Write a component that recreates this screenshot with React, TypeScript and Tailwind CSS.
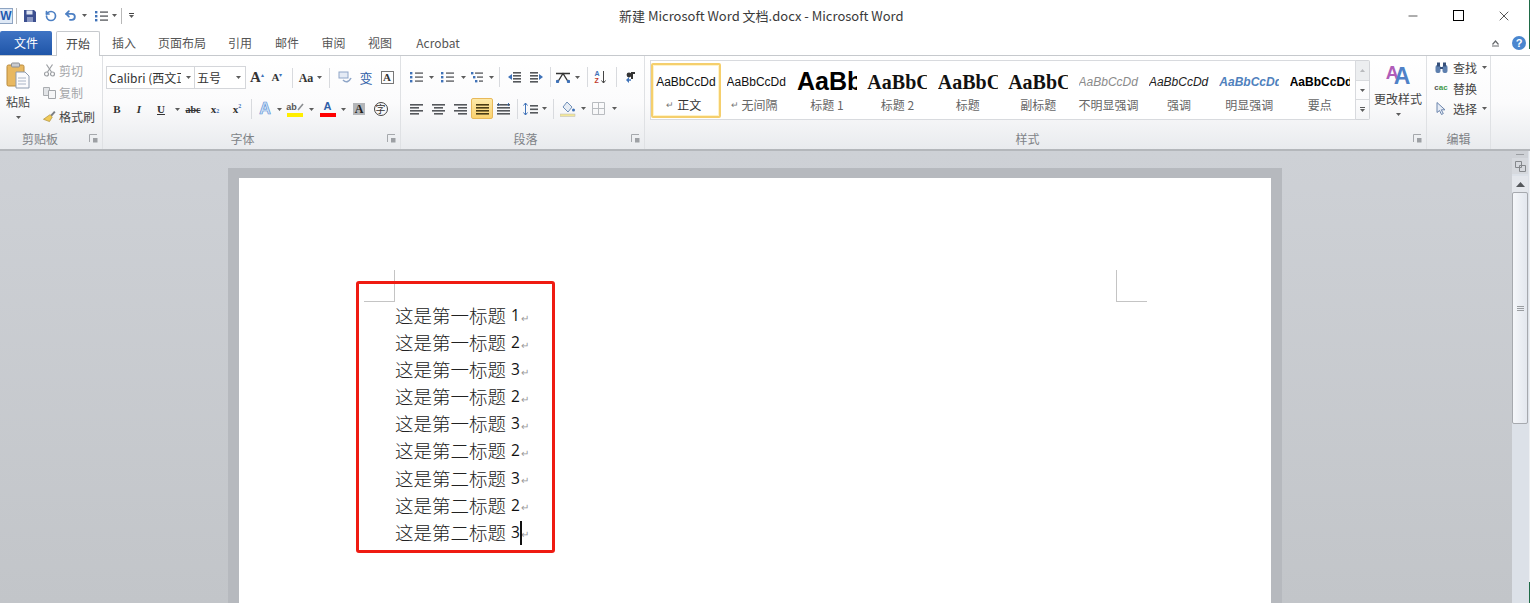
import React from "react";
import { Minus, X, Undo2, RotateCcw } from "lucide-react";

const UI = "font-['Noto_Sans_CJK_SC','Liberation_Sans',sans-serif]";

type CellProps = { className: string; children?: React.ReactNode };

const Cell = ({ className, children }: CellProps) => (
  <span className={`flex shrink-0 items-center justify-center ${className}`}>{children}</span>
);

const Caret = ({ className = "" }: { className?: string }) => (
  <svg width="5" height="3" viewBox="0 0 5 3" className={`shrink-0 ${className}`}>
    <path d="M0 0h5L2.5 3z" fill="#5c5c5c" />
  </svg>
);

const Sep = ({ className }: { className: string }) => (
  <Cell className={className}>
    <span className="h-[20px] w-px bg-[#d8dade]" />
  </Cell>
);

const Launcher = () => (
  <svg width="9" height="9" viewBox="0 0 9 9">
    <path d="M0.5 8V0.5H8" fill="none" stroke="#a5a8ac" />
    <path d="M4 4h4.5v4.5H4z" fill="#9da0a4" />
  </svg>
);

// paragraph icons
const Lines = ({ kind }: { kind: "left" | "center" | "right" | "justify" | "dist" }) => {
  const rows = [
    { y: 1, l: 0, w: 13 },
    { y: 4, l: 0, w: 13 },
    { y: 7, l: 0, w: 13 },
    { y: 10, l: 0, w: 13 },
  ].map((r, i) => {
    const short = i % 2 === 1 ? 4 : 0;
    if (kind === "left") return { ...r, w: 13 - short };
    if (kind === "center") return { ...r, l: short / 2, w: 13 - short };
    if (kind === "right") return { ...r, l: short, w: 13 - short };
    return r;
  });
  return (
    <svg width="13" height="12" viewBox="0 0 13 12">
      {rows.map((r) => (
        <rect key={r.y} x={r.l} y={r.y} width={r.w} height="1.6" fill={kind === "justify" ? "#4a3c14" : "#55585c"} />
      ))}
      {kind === "dist" && <path d="M1 0l1.5 1.5L1 3M12 0l-1.5 1.5L12 3" stroke="#3b6fb5" fill="none" />}
    </svg>
  );
};

const ListIcon = ({ kind }: { kind: "bullet" | "number" | "multi" }) => (
  <svg width="13" height="12" viewBox="0 0 13 12">
    {[1, 5, 9].map((y, i) => (
      <g key={y}>
        <rect x={kind === "multi" ? i * 2 : 0} y={y} width="2.4" height="2.4" fill="#3f72b8" />
        <rect x={kind === "multi" ? 4 + i * 2 : 5} y={y + 0.4} width={kind === "multi" ? 8 - i * 2 : 8} height="1.4" fill="#606367" />
      </g>
    ))}
  </svg>
);

const Indent = ({ flip }: { flip?: boolean }) => (
  <svg width="13" height="12" viewBox="0 0 13 12" className={flip ? "-scale-x-100" : ""}>
    {[1, 4, 7, 10].map((y) => (
      <rect key={y} x="5" y={y} width="8" height="1.6" fill="#55585c" />
    ))}
    <path d="M4 3L0 6l4 3z" fill="#3f72b8" />
  </svg>
);

const PasteIcon = () => (
  <svg width="24" height="27" viewBox="0 0 24 27">
    <rect x="1" y="3" width="17" height="21" rx="1.5" fill="#e8b861" stroke="#b98a3c" />
    <rect x="5.5" y="1" width="8" height="4" rx="1" fill="#c9cbd0" stroke="#8c8f94" />
    <path d="M10 10h9l4 4v12H10z" fill="#fbfbfd" stroke="#8d9bb0" />
    <path d="M12 16h8M12 19h8M12 22h8" stroke="#a9b4c6" />
  </svg>
);

const ScissorsIcon = () => (
  <svg width="11" height="13" viewBox="0 0 11 13" fill="none" stroke="#9c9fa3" strokeWidth="1.2">
    <path d="M2.5 0.5l5 7.5M8.5 0.5l-5 7.5" />
    <circle cx="2.5" cy="10" r="2" />
    <circle cx="8.5" cy="10" r="2" />
  </svg>
);

const CopyIcon = () => (
  <svg width="13" height="12" viewBox="0 0 13 12">
    <path d="M0.5 0.5h6v8h-6z" fill="#e2e4e7" stroke="#aaadb1" />
    <path d="M5.5 3.5h7v8h-7z" fill="#f6f6f7" stroke="#a3a6aa" />
  </svg>
);

const BrushIcon = () => (
  <svg width="14" height="13" viewBox="0 0 14 13">
    <path d="M8 5l4-4.5 1.5 1.5L9.5 6.5z" fill="#7a7d82" />
    <path d="M7.5 4.5l2.5 2.5-3 5L0.5 9.5z" fill="#f0c957" stroke="#a88a30" strokeWidth="0.7" />
  </svg>
);

const StyleItem = ({
  preview,
  previewClass,
  label,
  mark,
  selected,
}: {
  preview: string;
  previewClass: string;
  label: string;
  mark?: boolean;
  selected?: boolean;
}) => (
  <div
    className={`flex h-[55px] w-[70.4px] shrink-0 flex-col items-center ${
      selected ? "rounded-[2px] border-2 border-[#f5cf6d] shadow-[inset_0_0_0_1px_#fff3c9]" : "border-2 border-transparent"
    }`}
  >
    <div className="mt-[3px] flex h-[29px] w-[60px] items-center overflow-hidden">
      <span className={`whitespace-nowrap ${previewClass}`}>{preview}</span>
    </div>
    <div className={`flex items-center gap-[3px] text-[12px] leading-[16px] ${mark ? "pr-[5px]" : ""} ${selected ? "text-[#333]" : "text-[#666]"}`}>
      {mark && <span className="text-[9px] text-[#777]">↵</span>}
      {label}
    </div>
  </div>
);

const STYLES = [
  { preview: "AaBbCcDd", previewClass: "font-['Liberation_Sans'] text-[12px] text-[#111]", label: "正文", mark: true, selected: true },
  { preview: "AaBbCcDd", previewClass: "font-['Liberation_Sans'] text-[12px] text-[#111]", label: "无间隔", mark: true },
  { preview: "AaBbCcDd", previewClass: "font-['Liberation_Sans'] text-[25px] font-bold text-black", label: "标题 1" },
  { preview: "AaBbCcDd", previewClass: "font-['Liberation_Serif'] text-[20px] font-bold text-[#111]", label: "标题 2" },
  { preview: "AaBbCcDd", previewClass: "font-['Liberation_Serif'] text-[20px] font-bold text-[#111]", label: "标题" },
  { preview: "AaBbCcDd", previewClass: "font-['Liberation_Serif'] text-[20px] font-bold text-[#111]", label: "副标题" },
  { preview: "AaBbCcDd", previewClass: "font-['Liberation_Sans'] text-[12px] italic text-[#8b8b8b]", label: "不明显强调" },
  { preview: "AaBbCcDd", previewClass: "font-['Liberation_Sans'] text-[12px] italic text-[#222]", label: "强调" },
  { preview: "AaBbCcDd", previewClass: "font-['Liberation_Sans'] text-[12px] font-bold italic text-[#4f81bd]", label: "明显强调" },
  { preview: "AaBbCcDd", previewClass: "font-['Liberation_Sans'] text-[12px] font-bold text-black", label: "要点" },
];

const LINES = [
  "这是第一标题 1",
  "这是第一标题 2",
  "这是第一标题 3",
  "这是第一标题 2",
  "这是第一标题 3",
  "这是第二标题 2",
  "这是第二标题 3",
  "这是第二标题 2",
  "这是第二标题 3",
];

const GroupLabel = ({ text, launcher, className = "" }: { text: string; launcher?: boolean; className?: string }) => (
  <div className={`relative flex h-[19px] items-center justify-center pb-[2px] text-[12px] text-[#808387] ${className}`}>
    {text}
    {launcher && (
      <span className="absolute right-[4px] top-[4px] flex">
        <Launcher />
      </span>
    )}
  </div>
);

export default function App() {
  return (
    <div className={`relative flex h-[603px] w-[1530px] flex-col overflow-hidden bg-white ${UI}`}>
      {/* title bar */}
      <div className="flex h-[31px] shrink-0 items-center pr-[18px]">
        <div className="flex w-[619px] shrink-0 items-center">
          <span className="ml-[-1px] flex h-[16px] w-[14px] shrink-0 items-center justify-center border border-[#8ea4c2] bg-[#dfe9f6] font-['Liberation_Sans'] text-[12px] font-bold text-[#1f5cb0]">
            W
          </span>
          <span className="ml-[3px] h-[16px] w-px shrink-0 bg-[#b8b8b8]" />
          <svg width="12" height="12" viewBox="0 0 12 12" className="ml-[7px] shrink-0">
            <path d="M0 0h10l2 2v10H0z" fill="#3c4f8f" />
            <rect x="2.5" y="0.5" width="6" height="4" fill="#dfe5f2" />
            <rect x="3" y="7" width="6" height="5" fill="#8a97c2" />
          </svg>
          <Cell className="ml-[8px] w-[14px]">
            <RotateCcw size={12} strokeWidth={3.4} color="#4d80c4" />
          </Cell>
          <Cell className="ml-[5px] w-[14px]">
            <Undo2 size={13} strokeWidth={3.4} color="#4d80c4" />
          </Cell>
          <Caret className="ml-[5px]" />
          <Cell className="ml-[7px] w-[14px]">
            <ListIcon kind="number" />
          </Cell>
          <Caret className="ml-[4px]" />
          <span className="ml-[4px] h-[16px] w-px shrink-0 bg-[#b8b8b8]" />
          <span className="ml-[7px] flex shrink-0 flex-col items-center gap-[1px]">
            <span className="h-px w-[5px] bg-[#444]" />
            <Caret />
          </span>
        </div>
        <div className="whitespace-nowrap text-[13px] text-[#3a3a3a]">新建 Microsoft Word 文档.docx - Microsoft Word</div>
        <div className="ml-auto flex items-center">
          <Cell className="w-[14px]">
            <Minus size={14} strokeWidth={1.1} color="#000" />
          </Cell>
          <span className="ml-[33px] h-[11px] w-[11px] shrink-0 border border-black" />
          <Cell className="ml-[32px] w-[16px]">
            <X size={16} strokeWidth={1} color="#000" />
          </Cell>
        </div>
      </div>

      {/* tabs */}
      <div className="flex h-[25px] shrink-0 items-end border-b border-[#c6c9cd] text-[12px] text-[#555]">
        <div className="flex h-[24px] w-[52px] items-center justify-center rounded-t-[2px] bg-gradient-to-b from-[#3f74c4] to-[#1f55a8] text-white">文件</div>
        <div className="relative top-px ml-[4px] flex h-[25px] w-[44px] items-center justify-center rounded-t-[2px] border border-b-0 border-[#c6c9cd] bg-white text-[#444]">开始</div>
        <div className="flex h-[24px] w-[48px] items-center justify-center">插入</div>
        <div className="flex h-[24px] w-[68px] items-center justify-center">页面布局</div>
        <div className="flex h-[24px] w-[48px] items-center justify-center">引用</div>
        <div className="flex h-[24px] w-[46px] items-center justify-center">邮件</div>
        <div className="flex h-[24px] w-[47px] items-center justify-center">审阅</div>
        <div className="flex h-[24px] w-[46px] items-center justify-center">视图</div>
        <div className="flex h-[24px] w-[70px] items-center justify-center">Acrobat</div>
        <div className="ml-auto flex h-[24px] items-center pr-[4px]">
          <svg width="9" height="7" viewBox="0 0 9 7" className="mr-[12px]" fill="none" stroke="#66696d" strokeWidth="1.2">
            <path d="M1 6h7M1.5 4.5L4.5 1l3 3.5" />
          </svg>
          <span className="flex h-[14px] w-[14px] items-center justify-center rounded-full bg-[#4a86cf] font-['Liberation_Sans'] text-[11px] font-bold text-white">?</span>
        </div>
      </div>

      {/* ribbon */}
      <div className="flex h-[95px] shrink-0 border-b-2 border-[#b4b7bb] bg-gradient-to-b from-white via-[#fbfbfc] to-[#e9ebee]">
        {/* clipboard */}
        <div className="flex w-[103px] shrink-0 flex-col border-r border-[#dfe1e4]">
          <div className="flex h-[74px]">
            <div className="flex w-[36px] flex-col items-center pt-[6px]">
              <PasteIcon />
              <span className="mt-[5px] text-[12px] leading-[16px] text-[#444]">粘贴</span>
              <Caret className="mt-[6px]" />
            </div>
            <div className="ml-[7px] flex flex-col gap-[5px] pt-[6px] text-[12px] leading-[17px] text-[#a5a7aa]">
              <div className="flex items-center gap-[3px]">
                <Cell className="w-[13px]"><ScissorsIcon /></Cell>
                剪切
              </div>
              <div className="flex items-center gap-[3px]">
                <Cell className="w-[13px]"><CopyIcon /></Cell>
                复制
              </div>
              <div className="mt-[2px] flex items-center gap-[3px] text-[#444]">
                <Cell className="w-[13px]"><BrushIcon /></Cell>
                格式刷
              </div>
            </div>
          </div>
          <GroupLabel text="剪贴板" launcher className="pr-[22px]" />
        </div>

        {/* font */}
        <div className="flex w-[298px] shrink-0 flex-col border-r border-[#dfe1e4]">
          <div className="h-[74px]">
            <div className="flex h-[33px] items-end pl-[3px]">
              <div className="flex h-[23px] w-[140px] shrink-0 items-center border border-[#d4d6da] bg-white text-[12px] text-[#333]">
                <span className="w-[74px] overflow-hidden whitespace-nowrap pl-[2px]">Calibri (西文正文)</span>
                <Caret className="ml-[5px]" />
                <span className="ml-[3px] h-full w-px bg-[#d4d6da]" />
                <span className="pl-[2px]">五号</span>
                <Caret className="ml-auto mr-[4px]" />
              </div>
              <div className="flex h-[23px] items-center font-['Liberation_Serif'] text-[#333]">
                <Cell className="w-[22px]">
                  <span className="text-[15px] font-bold leading-none">A</span>
                  <span className="mb-[6px] text-[6px] leading-none text-[#3f72b8]">▴</span>
                </Cell>
                <Cell className="w-[18px]">
                  <span className="text-[11px] font-bold leading-none">A</span>
                  <span className="mb-[6px] text-[6px] leading-none text-[#3f72b8]">▾</span>
                </Cell>
                <Sep className="w-[12px]" />
                <Cell className="w-[16px] text-[12px] font-bold">Aa</Cell>
                <Cell className="w-[10px]"><Caret /></Cell>
                <Sep className="w-[10px]" />
                <Cell className="w-[21px]">
                  <svg width="14" height="13" viewBox="0 0 14 13" fill="none">
                    <rect x="1" y="1" width="9" height="6" fill="#e5ebf5" stroke="#8fa6c8" />
                    <path d="M5 9c3 3 6 2 8-2" stroke="#8fa6c8" strokeWidth="1.6" />
                  </svg>
                </Cell>
                <Cell className={`w-[22px] text-[13px] text-[#2f5fa8] ${UI}`}>变</Cell>
                <Cell className="w-[20px]">
                  <span className="flex h-[13px] w-[13px] items-center justify-center border border-[#777] text-[11px] font-bold leading-none">A</span>
                </Cell>
              </div>
            </div>
            <div className="mt-[9px] flex h-[22px] items-center pl-[3px] font-['Liberation_Serif'] text-[#333]">
              <Cell className="w-[22px] text-[11px] font-bold">B</Cell>
              <Cell className="w-[22px] text-[11px] font-bold italic">I</Cell>
              <Cell className="w-[22px] text-[11px] font-bold underline">U</Cell>
              <Cell className="w-[10px]"><Caret /></Cell>
              <Cell className="w-[22px] text-[10px] font-bold line-through">abc</Cell>
              <Cell className="w-[22px] text-[11px] font-bold">
                x<span className="mt-[5px] text-[6px] text-[#3f72b8]">2</span>
              </Cell>
              <Cell className="w-[22px] text-[11px] font-bold">
                x<span className="mb-[5px] text-[6px] text-[#3f72b8]">2</span>
              </Cell>
              <Sep className="w-[6px]" />
              <Cell className="w-[22px] font-['Liberation_Sans'] text-[16px] font-bold text-[#cfe2f7] [-webkit-text-stroke:0.7px_#5f93d6]">A</Cell>
              <Cell className="w-[7px]"><Caret /></Cell>
              <Cell className="w-[24px]">
                <span className="flex flex-col items-center">
                  <span className="flex items-center">
                    <span className="font-['Liberation_Sans'] text-[9px] font-bold leading-[10px] text-[#555]">ab</span>
                    <svg width="7" height="8" viewBox="0 0 7 8">
                      <path d="M1 7l5-6" stroke="#8a8d91" strokeWidth="1.6" />
                    </svg>
                  </span>
                  <span className="mt-[1px] h-[4px] w-[16px] bg-[#ffee00]" />
                </span>
              </Cell>
              <Cell className="w-[8px]"><Caret /></Cell>
              <Cell className="w-[25px]">
                <span className="flex flex-col items-center">
                  <span className="font-['Liberation_Sans'] text-[11px] font-bold leading-[11px] text-[#2f5fa8]">A</span>
                  <span className="mt-[1px] h-[4px] w-[16px] bg-[#f00]" />
                </span>
              </Cell>
              <Cell className="w-[7px]"><Caret /></Cell>
              <Cell className="w-[24px]">
                <span className="flex h-[12px] w-[12px] items-center justify-center bg-[#b4b6b9] font-['Liberation_Serif'] text-[12px] font-bold leading-none text-[#222]">A</span>
              </Cell>
              <Cell className="w-[19px]">
                <span className={`flex h-[14px] w-[14px] items-center justify-center rounded-full border border-[#444] text-[10px] leading-none text-[#333] ${UI}`}>字</span>
              </Cell>
            </div>
          </div>
          <GroupLabel text="字体" launcher className="pr-[18px]" />
        </div>

        {/* paragraph */}
        <div className="flex w-[244px] shrink-0 flex-col border-r border-[#dfe1e4]">
          <div className="h-[74px] pl-[5px]">
            <div className="mt-[10px] flex h-[22px] items-center">
              <Cell className="w-[20px]"><ListIcon kind="bullet" /></Cell>
              <Cell className="w-[10px]"><Caret /></Cell>
              <Cell className="w-[22px]"><ListIcon kind="number" /></Cell>
              <Cell className="w-[10px]"><Caret /></Cell>
              <Cell className="w-[19px]"><ListIcon kind="multi" /></Cell>
              <Cell className="w-[8px]"><Caret /></Cell>
              <Sep className="w-[8px]" />
              <Cell className="w-[22px]"><Indent /></Cell>
              <Cell className="w-[22px]"><Indent flip /></Cell>
              <Sep className="w-[6px]" />
              <Cell className="w-[20px]">
                <svg width="14" height="11" viewBox="0 0 14 11" fill="none" stroke="#333" strokeWidth="1.4">
                  <path d="M0 1.5h14M2 9.5l5-8 5 8" />
                  <circle cx="1.5" cy="9.5" r="1" fill="#3f72b8" stroke="#3f72b8" />
                  <circle cx="12.5" cy="9.5" r="1" fill="#3f72b8" stroke="#3f72b8" />
                </svg>
              </Cell>
              <Cell className="w-[8px]"><Caret /></Cell>
              <Sep className="w-[12px]" />
              <Cell className="w-[14px] gap-[1px]">
                <span className="flex flex-col font-['Liberation_Sans'] text-[7px] font-bold leading-[7px]">
                  <span className="text-[#3f72b8]">A</span>
                  <span className="text-[#c0392b]">Z</span>
                </span>
                <svg width="5" height="13" viewBox="0 0 5 13" fill="none" stroke="#444">
                  <path d="M2.5 0v12M0.5 9.5l2 2.5 2-2.5" />
                </svg>
              </Cell>
              <Sep className="w-[18px]" />
              <Cell className="w-[10px]">
                <svg width="9" height="12" viewBox="0 0 9 12">
                  <path d="M5 1h4v2H7v5H5z" fill="#333" />
                  <circle cx="3" cy="4" r="2.4" fill="#333" />
                  <path d="M0 9l3 3V9.8h2V8.2H3V6z" fill="#3f72b8" />
                </svg>
              </Cell>
            </div>
            <div className="mt-[10px] flex h-[21px] items-center">
              <Cell className="w-[21px]"><Lines kind="left" /></Cell>
              <Cell className="w-[22px]"><Lines kind="center" /></Cell>
              <Cell className="w-[22px]"><Lines kind="right" /></Cell>
              <Cell className="h-[21px] w-[22px] rounded-[2px] border border-[#e8b95a] bg-gradient-to-b from-[#fde9a8] to-[#fbd26e]"><Lines kind="justify" /></Cell>
              <Cell className="w-[21px]"><Lines kind="dist" /></Cell>
              <Sep className="w-[7px]" />
              <Cell className="w-[18px]">
                <svg width="15" height="14" viewBox="0 0 15 14">
                  <path d="M2.5 1v12M0.5 3.5l2-2.5 2 2.5M0.5 10.5l2 2.5 2-2.5" fill="none" stroke="#3f72b8" />
                  <rect x="7" y="3" width="8" height="1.6" fill="#55585c" />
                  <rect x="7" y="6.5" width="8" height="1.6" fill="#55585c" />
                  <rect x="7" y="10" width="8" height="1.6" fill="#55585c" />
                </svg>
              </Cell>
              <Cell className="w-[10px]"><Caret /></Cell>
              <Sep className="w-[8px]" />
              <Cell className="w-[22px]">
                <svg width="16" height="16" viewBox="0 0 16 16">
                  <path d="M7 1l5 5-4 5-5-5z" fill="#e6ecf4" stroke="#6f8fb8" />
                  <circle cx="13.5" cy="9" r="1.5" fill="#3f72b8" />
                  <rect x="0" y="13" width="15" height="2.4" fill="#f2e79a" stroke="#b8b8b8" strokeWidth="0.5" />
                </svg>
              </Cell>
              <Cell className="w-[8px]"><Caret /></Cell>
              <Cell className="w-[22px]">
                <svg width="13" height="13" viewBox="0 0 13 13" fill="none" stroke="#b9bcc0">
                  <path d="M0.5 0.5h12v12h-12zM6.5 0.5v12M0.5 6.5h12" />
                </svg>
              </Cell>
              <Cell className="w-[10px]"><Caret /></Cell>
            </div>
          </div>
          <GroupLabel text="段落" launcher className="pl-[6px]" />
        </div>

        {/* styles */}
        <div className="flex w-[782px] shrink-0 flex-col border-r border-[#dfe1e4]">
          <div className="flex h-[74px] pl-[5px] pt-[4px]">
            <div className="flex h-[60px] w-[706px] shrink-0 items-center border border-[#d8dade] bg-white">
              {STYLES.map((s) => (
                <StyleItem key={s.label} {...s} />
              ))}
            </div>
            <div className="flex h-[60px] w-[14px] shrink-0 flex-col rounded-r-[2px] border border-l-0 border-[#d3d5d9]">
              <Cell className="h-[20px] border-b border-[#d9dbde] bg-[#eceef0]">
                <svg width="5" height="3" viewBox="0 0 5 3"><path d="M0 3h5L2.5 0z" fill="#b8babd" /></svg>
              </Cell>
              <Cell className="h-[19px] border-b border-[#d9dbde]"><Caret /></Cell>
              <Cell className="h-[19px] flex-col gap-[1px]">
                <span className="h-px w-[5px] bg-[#5c5c5c]" />
                <Caret />
              </Cell>
            </div>
            <div className="flex w-[56px] shrink-0 flex-col items-center pt-[2px]">
              <span className="flex h-[26px] items-end font-['Liberation_Sans'] font-bold leading-none">
                <span className="mb-[6px] text-[18px] text-[#b05cb8]">A</span>
                <span className="ml-[-5px] text-[23px] text-[#4f81c7]">A</span>
              </span>
              <span className="mt-[3px] whitespace-nowrap text-[12px] leading-[16px] text-[#444]">更改样式</span>
              <Caret className="mt-[6px]" />
            </div>
          </div>
          <GroupLabel text="样式" launcher className="pr-[16px]" />
        </div>

        {/* editing */}
        <div className="flex w-[64px] shrink-0 flex-col border-r border-[#dfe1e4]">
          <div className="flex h-[74px] flex-col gap-[3.5px] pl-[7px] pt-[3px] text-[12px] leading-[17px] text-[#444]">
            <div className="flex items-center gap-[5px]">
              <Cell className="w-[14px]">
                <svg width="13" height="12" viewBox="0 0 13 12">
                  <rect x="0.5" y="3" width="5" height="8" rx="2" fill="#5d7fae" />
                  <rect x="7.5" y="3" width="5" height="8" rx="2" fill="#5d7fae" />
                  <rect x="2" y="0.5" width="3" height="4" fill="#36507a" />
                  <rect x="8" y="0.5" width="3" height="4" fill="#36507a" />
                  <rect x="5" y="5" width="3" height="2" fill="#36507a" />
                </svg>
              </Cell>
              查找
              <Caret />
            </div>
            <div className="flex items-center gap-[5px]">
              <Cell className="w-[14px] font-['Liberation_Sans'] text-[8px] font-bold leading-none">
                <span className="text-[#555]">c</span>
                <span className="text-[#3f9a4a]">ac</span>
              </Cell>
              替换
            </div>
            <div className="flex items-center gap-[5px]">
              <Cell className="w-[14px]">
                <svg width="10" height="13" viewBox="0 0 10 13">
                  <path d="M1 0.5v10l2.5-2 2 4 1.8-.9-2-3.8H9z" fill="#e6ecf6" stroke="#6d86ad" />
                </svg>
              </Cell>
              选择
              <Caret />
            </div>
          </div>
          <GroupLabel text="编辑" />
        </div>
      </div>

      {/* document area */}
      <div className="flex min-h-0 flex-1 bg-gradient-to-b from-[#ced1d6] to-[#c2c5c9]">
        <div className="min-w-0 flex-1 overflow-hidden pl-[228px] pt-[17px]">
          <div className="h-[600px] w-[1054px] bg-[#b6b9be] pl-[11px] pt-[10px]">
            <div className="relative h-[600px] w-[1032px] bg-white pl-[156px] pt-[124px]">
              {/* crop marks */}
              <span className="absolute left-[125px] top-[92px] h-[32px] w-[31px] border-b border-r border-[#c4c4c4]" />
              <span className="absolute left-[877px] top-[92px] h-[32px] w-[31px] border-b border-l border-[#c4c4c4]" />
              {LINES.map((line, i) => (
                <div key={i} className="relative flex h-[27.1px] items-center whitespace-nowrap text-[18.5px] font-light leading-[27.1px] text-[#222]">
                  {line.slice(0, -2)}
                  <span className="ml-[5px] font-['Open_Sans'] text-[15.5px] font-normal text-[#111]">{line.slice(-1)}</span>
                  <span className="ml-px mt-[3px] text-[10px] font-normal text-[#999]">↵</span>
                  {i === LINES.length - 1 && <span className="absolute left-[124.5px] top-[2px] h-[24px] w-[2px] bg-[#111]" />}
                </div>
              ))}
              {/* red annotation */}
              <span className="absolute left-[117px] top-[103px] h-[272px] w-[199px] rounded-[3px] border-[3px] border-[#ef1b12]" />
            </div>
          </div>
        </div>
        {/* scrollbar */}
        <div className="flex w-[18px] shrink-0 flex-col border-r border-[#eef0f3] bg-[#dce1e8] pr-px">
          <div className="flex h-[7px] items-center justify-center bg-[#ced1d6]">
            <span className="h-px w-[8px] bg-[#9b9ea2]" />
          </div>
          <Cell className="h-[16px] bg-[#d6d9de]">
            <svg width="11" height="11" viewBox="0 0 11 11" fill="none" stroke="#85888c">
              <path d="M0.5 0.5h6v6h-6zM4.5 4.5h6v6h-6z" />
            </svg>
          </Cell>
          <Cell className="mt-[2px] h-[16px] bg-[#e4e7ec]">
            <svg width="9" height="5" viewBox="0 0 9 5"><path d="M0 5h9L4.5 0z" fill="#55585c" /></svg>
          </Cell>
          <div className="flex h-[232px] shrink-0 items-center justify-center rounded-[2px] border border-[#a6a9ae] bg-gradient-to-r from-[#f5f7fa] to-[#e3e7ee]">
            <span className="flex flex-col gap-px">
              <span className="h-px w-[7px] bg-[#9a9da1]" />
              <span className="h-px w-[7px] bg-[#9a9da1]" />
              <span className="h-px w-[7px] bg-[#9a9da1]" />
            </span>
          </div>
        </div>
      </div>

      {/* desktop edge showing behind the window */}
      <span className="absolute right-0 top-0 h-[49px] w-px bg-[#1f6b47]" />
      <span className="absolute bottom-0 right-0 h-[21px] w-px bg-[#1f6b47]" />
    </div>
  );
}
